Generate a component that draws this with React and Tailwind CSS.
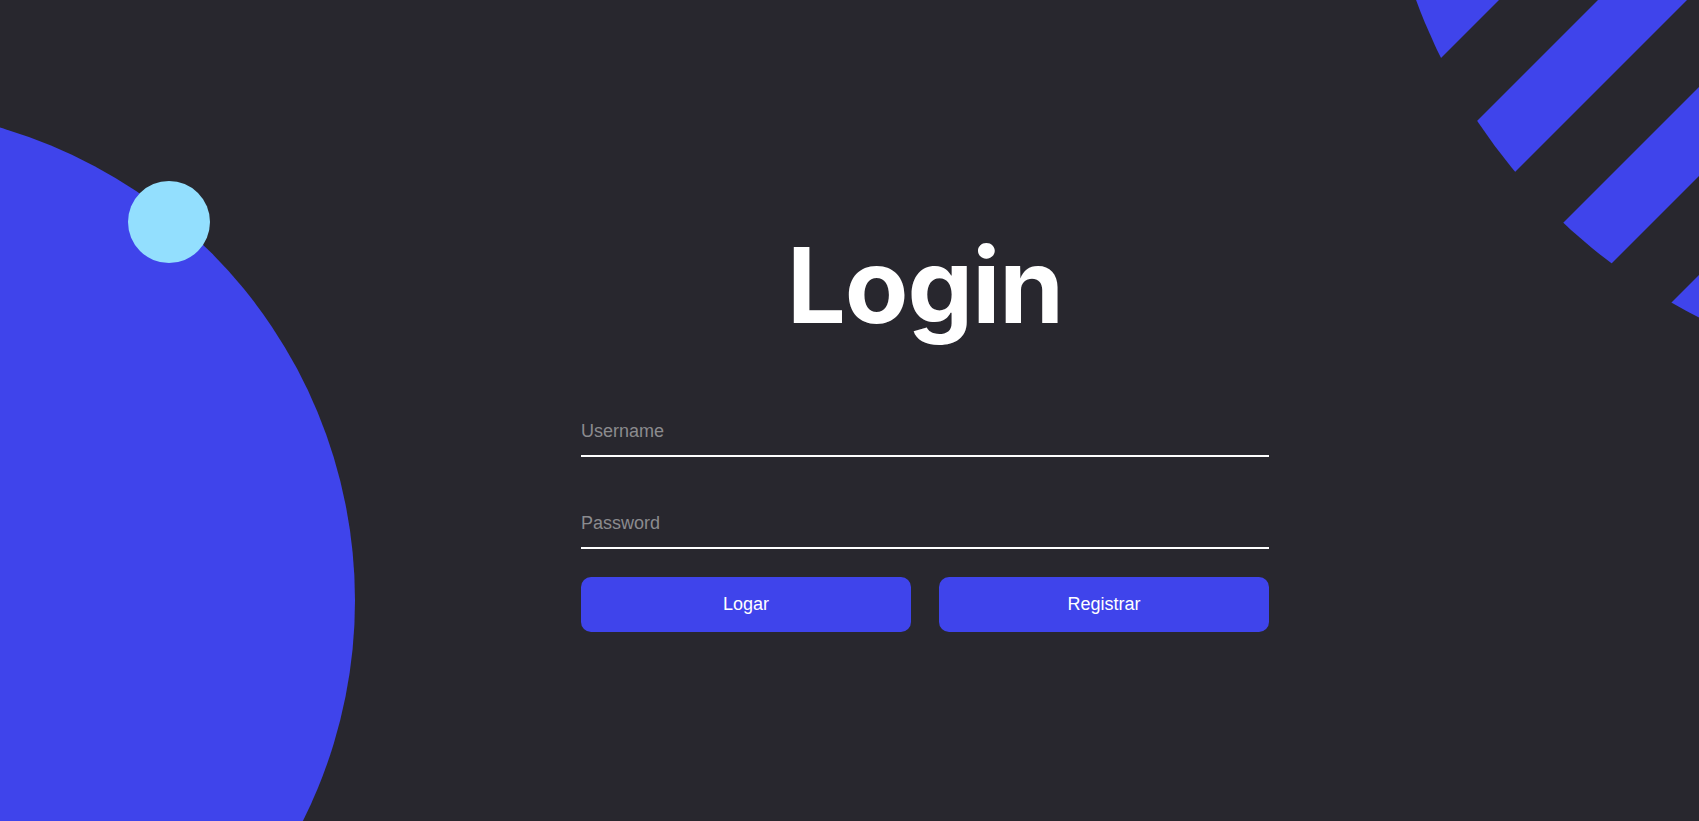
import React from "react";

function Stripes() {
  const bands = [1410, 1598, 1786, 1974, 2162, 2350];
  return (
    <svg
      className="absolute top-0 right-0 pointer-events-none"
      width="319"
      height="340"
      viewBox="1380 0 319 340"
    >
      <defs>
        <clipPath id="stripeClip">
          <circle cx="1958" cy="-198" r="577" />
        </clipPath>
      </defs>
      <g clipPath="url(#stripeClip)" fill="#3f44eb">
        {bands.map((a) => {
          const b = a + 89;
          return (
            <polygon
              key={a}
              points={`${a + 1000},-1000 ${b + 1000},-1000 ${b - 1000},1000 ${a - 1000},1000`}
            />
          );
        })}
      </g>
    </svg>
  );
}

export default function App() {
  return (
    <div className="relative h-screen w-full overflow-hidden bg-[#28272e]">
      <div className="absolute left-[-630px] top-[108px] h-[985px] w-[985px] rounded-full bg-[#3f44eb]" />
      <div className="absolute left-[128px] top-[181px] h-[82px] w-[82px] rounded-full bg-[#93dffe]" />
      <Stripes />

      <div className="relative z-10 flex flex-col items-center pl-[151px] pt-[233px]">
        <h1 className="h-[104px] font-[Inter,sans-serif] text-[104px] font-bold leading-none tracking-[-1px] text-white">
          Login
        </h1>
        <form
          className="mt-[70px] flex w-[688px] flex-col font-['Liberation_Sans',Arial,sans-serif]"
          onSubmit={(e) => e.preventDefault()}
        >
          <input
            type="text"
            placeholder="Username"
            className="h-[50px] w-full border-b-2 border-white bg-transparent text-[18px] text-white outline-none placeholder:text-[#8b8b8e]"
          />
          <input
            type="password"
            placeholder="Password"
            className="mt-[42px] h-[50px] w-full border-b-2 border-white bg-transparent text-[18px] text-white outline-none placeholder:text-[#8b8b8e]"
          />
          <div className="mt-[28px] grid grid-cols-2 gap-[28px]">
            <button
              type="submit"
              className="h-[55px] rounded-[10px] bg-[#3f44eb] text-[18px] text-white"
            >
              Logar
            </button>
            <button
              type="button"
              className="h-[55px] rounded-[10px] bg-[#3f44eb] text-[18px] text-white"
            >
              Registrar
            </button>
          </div>
        </form>
      </div>
    </div>
  );
}
